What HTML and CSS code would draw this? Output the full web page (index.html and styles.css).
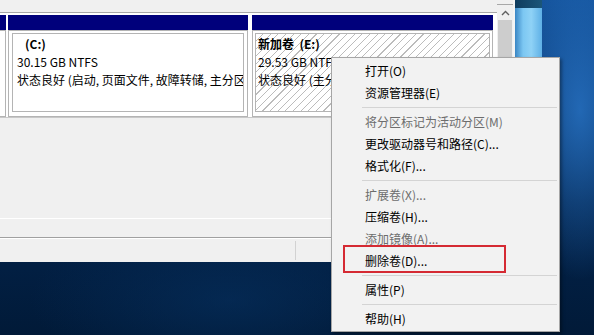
FILE: index.html
```html
<!DOCTYPE html>
<html lang="zh-CN">
<head>
<meta charset="utf-8">
<title>磁盘管理</title>
<link rel="stylesheet" href="styles.css">
</head>
<body>
<div class="screen">
  <div class="window">
    <div class="pane">
      <div class="graph">
        <div class="strip"></div>
        <div class="disk-row">
          <div class="vol vol-partial">
            <div class="vol-head"></div>
            <div class="vol-box"></div>
          </div>
          <div class="vol vol-c">
            <div class="vol-head"></div>
            <div class="vol-box">
              <div class="vol-inner">
                <div class="vol-name vol-name-c">(C:)</div>
                <div class="vol-line">30.15 GB NTFS</div>
                <div class="vol-line">状态良好 (启动, 页面文件, 故障转储, 主分区)</div>
              </div>
            </div>
          </div>
          <div class="vol vol-e">
            <div class="vol-head"></div>
            <div class="vol-box vol-box-sel">
              <div class="vol-inner vol-inner-sel">
                <div class="vol-name">新加卷&nbsp;&nbsp;(E:)</div>
                <div class="vol-line">29.53 GB NTFS</div>
                <div class="vol-line">状态良好 (主分区)</div>
              </div>
            </div>
          </div>
        </div>
        <div class="graph-rest"></div>
        <div class="graph-line"></div>
        <div class="graph-foot"></div>
      </div>
      <div class="vscroll">
        <div class="vscroll-btn">
          <svg width="9" height="6" viewBox="0 0 9 6"><polyline points="1,5 4.5,1.5 8,5" fill="none" stroke="#606060" stroke-width="1.4"/></svg>
        </div>
        <div class="vscroll-thumb"></div>
      </div>
      <div class="win-edge"></div>
    </div>
    <div class="statusbar">
      <div class="status-cell status-main"></div>
      <div class="status-cell"></div>
    </div>
  </div>
  <div class="desk-right">
    <div class="tile-top"></div>
    <div class="tile"></div>
  </div>
</div>

<div class="menu">
  <div class="mi">打开(O)</div>
  <div class="mi">资源管理器(E)</div>
  <div class="sep"></div>
  <div class="mi mi-dis">将分区标记为活动分区(M)</div>
  <div class="mi">更改驱动器号和路径(C)...</div>
  <div class="mi">格式化(F)...</div>
  <div class="sep"></div>
  <div class="mi mi-dis">扩展卷(X)...</div>
  <div class="mi">压缩卷(H)...</div>
  <div class="mi mi-dis">添加镜像(A)...</div>
  <div class="mi">删除卷(D)...</div>
  <div class="sep"></div>
  <div class="mi">属性(P)</div>
  <div class="sep"></div>
  <div class="mi">帮助(H)</div>
</div>
<div class="highlight"></div>
</body>
</html>
```

FILE: styles.css
```css
html, body {
  margin: 0;
  padding: 0;
}
body {
  width: 594px;
  height: 335px;
  overflow: hidden;
  font-family: "Noto Sans CJK SC", "Noto Sans", sans-serif;
  font-size: 12px;
  color: #000;
  background:
    radial-gradient(ellipse 70px 170px at 580px 110px, rgba(45, 125, 210, 0.7), rgba(45, 125, 210, 0) 100%),
    radial-gradient(ellipse 200px 80px at 230px 300px, rgba(6, 48, 95, 0.6), rgba(6, 48, 95, 0) 100%),
    linear-gradient(180deg, #124f96 0%, #0b3c78 25%, #03244d 60%, #011a38 100%);
}
.screen {
  display: flex;
  height: 335px;
}
.window {
  width: 515px;
  height: 262px;
  display: flex;
  flex-direction: column;
  background: #f0f0f0;
  flex: none;
}
.pane {
  display: flex;
  height: 237px;
  border-bottom: 1px solid #a0a0a0;
}
.graph {
  width: 497px;
  display: flex;
  flex-direction: column;
}
.strip {
  height: 12px;
  background: #f0f0f0;
  border-bottom: 1px solid #a8a8a8;
}
.disk-row {
  display: flex;
  height: 102px;
  padding-top: 2px;
  background: #fff;
  border-bottom: 1px solid #c8c8c8;
}
.vol {
  display: flex;
  flex-direction: column;
}
.vol-head {
  height: 15px;
  background: #00007b;
  flex: none;
}
.vol-box {
  flex: 1;
  display: flex;
  border: 1px solid #b4b4b4;
  padding: 2px 3px 4px 3px;
  background: #fff;
  min-width: 0;
}
.vol-partial {
  width: 6px;
}
.vol-partial .vol-box {
  border-left: none;
  padding: 0;
}
.vol-c {
  width: 240px;
  margin-left: 2px;
}
.vol-e {
  width: 241px;
  margin-left: 4px;
}
.vol-box-sel {
  padding: 2px 2px 4px 2px;
}
.vol-inner {
  flex: 1;
  min-width: 0;
  border: 1px solid #b4b4b4;
  padding: 1px 0 0 4px;
  overflow: hidden;
  white-space: nowrap;
  background: #fff;
}
.vol-inner-sel {
  padding-left: 2px;
  background: repeating-linear-gradient(135deg, #ffffff 0, #ffffff 4.6px, #bcbcbc 4.6px, #bcbcbc 5.4px);
}
.vol-name, .vol-line {
  height: 18px;
  line-height: 18px;
}
.vol-name {
  font-weight: bold;
}
.vol-name-c {
  padding-left: 8px;
}
.graph-rest {
  height: 100px;
  background: #f0f0f0;
}
.graph-line {
  height: 1px;
  background: #ffffff;
}
.graph-foot {
  flex: 1;
  background: #f0f0f0;
}
.vscroll {
  width: 16px;
  display: flex;
  flex-direction: column;
  background: #f0f0f0;
}
.vscroll-btn {
  height: 16px;
  margin-top: 4px;
  display: flex;
  align-items: center;
  justify-content: center;
  border-top: 1px solid #a8a8a8;
  box-sizing: border-box;
}
.vscroll-thumb {
  height: 150px;
  margin: 0 1px;
  background: #cdcdcd;
}
.win-edge {
  width: 2px;
  background: #f4f4f4;
}
.statusbar {
  flex: 1;
  display: flex;
  border-top: 1px solid #ffffff;
  padding: 2px 0;
}
.status-cell {
  flex: 1;
}
.status-main {
  flex: none;
  width: 295px;
  border-right: 1px solid #d2d2d2;
}
.desk-right {
  flex: 1;
  display: flex;
  flex-direction: column;
}
.tile-top {
  width: 27px;
  height: 8px;
  background: linear-gradient(90deg, #0f3c5e, #1b5679);
}
.tile {
  width: 27px;
  height: 49px;
  background: linear-gradient(90deg, #3a86c4 0%, #7cc7f2 30%, #8fd2f6 60%, #5eb0e6 100%);
}
.menu {
  position: absolute;
  left: 331px;
  top: 57px;
  width: 229px;
  height: 275px;
  box-sizing: border-box;
  background: #f2f2f2;
  border: 1px solid #a6a6a6;
  padding: 2px 0 1px 0;
  box-shadow: 2px 2px 3px rgba(0, 0, 0, 0.35);
}
.mi {
  height: 22px;
  line-height: 22px;
  padding-left: 33px;
  white-space: nowrap;
  color: #000;
}
.mi-dis {
  color: #6d6d6d;
}
.sep {
  height: 0;
  margin: 3px 2px 3px 30px;
  border-top: 1px solid #d4d4d4;
}
.highlight {
  position: absolute;
  left: 343px;
  top: 245px;
  width: 163px;
  height: 28px;
  box-sizing: border-box;
  border: 2px solid #d52a33;
}
```
